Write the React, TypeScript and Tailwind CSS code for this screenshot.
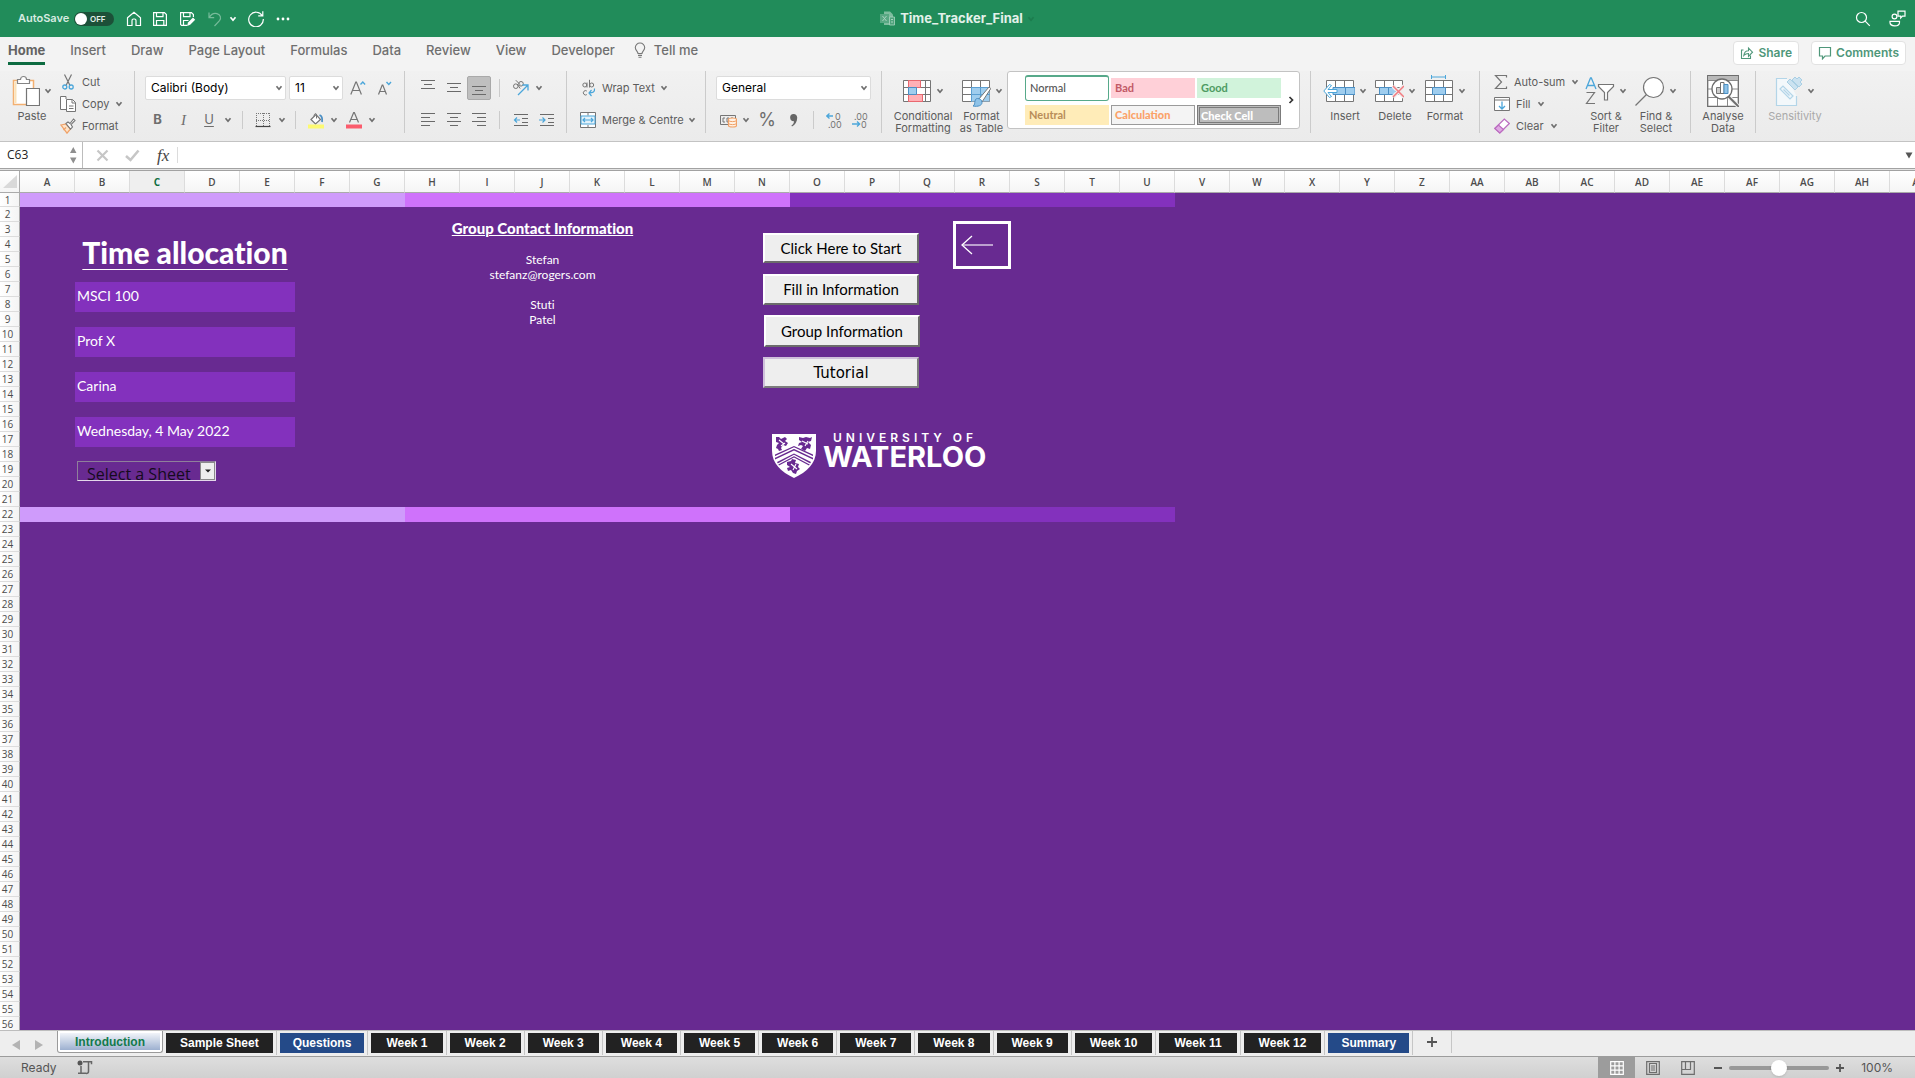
import React from 'react';

type Kids = { children?: React.ReactNode };

/* ---------- shared bits ---------- */

function Svg({ w, h, children, className = '' }: Kids & { w: number; h: number; className?: string }) {
  return (
    <svg width={w} height={h} viewBox={`0 0 ${w} ${h}`} fill="none" aria-hidden="true" className={`shrink-0 ${className}`}>
      {children}
    </svg>
  );
}

function Chevron({ className = 'text-[#6e6e6e]' }: { className?: string }) {
  return (
    <Svg w={8} h={6} className={className}>
      <path d="M1.5 1.3 4 4.2l2.5-2.9" stroke="currentColor" strokeWidth="1.7" />
    </Svg>
  );
}

function IconButton({ label, children, className = '' }: Kids & { label: string; className?: string }) {
  return (
    <button type="button" aria-label={label} className={`flex shrink-0 items-center justify-center ${className}`}>
      {children}
    </button>
  );
}

function Divider() {
  return <span className="h-[62px] w-px shrink-0 bg-[#cbcbcb]" />;
}

function ShortDivider() {
  return <span className="h-[18px] w-px shrink-0 bg-[#cbcbcb]" />;
}

/* ---------- title bar ---------- */

function TitleBar() {
  return (
    <header className="grid h-[37px] shrink-0 grid-cols-[1fr_auto_1fr] items-center bg-[#218c5a] text-white">
      <div className="flex items-center pl-[18px]">
        <label htmlFor="autosave" className="w-[56px] text-[11px] font-semibold text-[#d8ebe1]">
          AutoSave
        </label>
        <span className="relative flex h-[14px] w-10 items-center rounded-full bg-[#1c5038]">
          <input
            id="autosave"
            type="checkbox"
            className="ml-px h-3 w-3 appearance-none rounded-full bg-white"
          />
          <span className="ml-[3px] text-[8px] font-semibold text-[#e3efe9]">OFF</span>
        </span>
        <div className="ml-3 flex items-center gap-[10px]">
          <IconButton label="Home">
            <Svg w={16} h={16}>
              <path d="M1.5 6.8 8 1.2l6.5 5.6v7.7H10V9.5a1.5 1.5 0 0 0-1.5-1.5h-1A1.5 1.5 0 0 0 6 9.5v5H1.5z" stroke="#fff" strokeWidth="1.2" />
            </Svg>
          </IconButton>
          <IconButton label="Save">
            <Svg w={16} h={16}>
              <path d="M1.6 1.6h10.8l2 2v10.8H1.6zM4.5 1.6v4h6.5v-4M4.5 14.4V9.5h7.3v4.9" stroke="#fff" strokeWidth="1.2" />
            </Svg>
          </IconButton>
          <IconButton label="Save as" className="ml-px">
            <Svg w={18} h={16}>
              <path d="M8 14.4H2.6l-1-1V1.6h10.8l2 2V6M4.5 1.6v4h6.5v-4M4.5 14V9.5h5" stroke="#fff" strokeWidth="1.2" />
              <path d="m8 15 1-3.5 5-5 2.2 2.3-5 5z" fill="#fff" />
            </Svg>
          </IconButton>
          <IconButton label="Undo">
            <Svg w={16} h={16}>
              <path d="M2 1.5v5.2h5.2M2.2 6.5C4 3.4 7 1.800 10 2.600c3.500.9 4.500 4.400 2.500 7L7.500 15" stroke="#76bb9a" strokeWidth="1.2" />
            </Svg>
          </IconButton>
          <span className="-ml-1">
            <Chevron className="text-white" />
          </span>
          <IconButton label="Redo">
            <Svg w={18} h={17}>
              <path d="M15.300 5.800A7.300 7.300 0 1 0 16.300 9M15.800 1.200v4.600h-4.600" stroke="#fff" strokeWidth="1.2" />
            </Svg>
          </IconButton>
          <IconButton label="More commands">
            <Svg w={16} h={4}>
              <circle cx="3" cy="2" r="1.4" fill="#fff" />
              <circle cx="8" cy="2" r="1.4" fill="#fff" />
              <circle cx="13" cy="2" r="1.4" fill="#fff" />
            </Svg>
          </IconButton>
        </div>
      </div>
      <h1 className="flex items-center gap-1 text-[13px] font-bold text-[#e3f1ea]">
        <Svg w={16} h={15}>
          <path d="M4 .5h6l3 3V14H4z" fill="#7fbd9f" />
          <path d="M0 3h9v9H0z" fill="#58a883" />
          <path d="m2.500 5 4 5m0-5-4 5" stroke="#a9d3bf" />
          <path d="M9.500 6h5v8h-5z" fill="#4fa37c" stroke="#a9d3bf" strokeWidth=".8" />
          <path d="M11 8.500h2M11 11h2" stroke="#a9d3bf" />
        </Svg>
        Time_Tracker_Final
        <Chevron className="text-[#1c7c4e]" />
      </h1>
      <div className="flex items-center justify-end gap-[18px] pr-[9px]">
        <IconButton label="Search">
          <Svg w={16} h={16}>
            <circle cx="6.500" cy="6.500" r="5" stroke="#fff" strokeWidth="1.2" />
            <path d="m10.200 10.200 4.600 4.600" stroke="#fff" strokeWidth="1.2" />
          </Svg>
        </IconButton>
        <IconButton label="Collaboration">
          <Svg w={17} h={17}>
            <circle cx="5.500" cy="6.500" r="2.400" stroke="#fff" strokeWidth="1.2" />
            <path d="M1 11.400h9.500v1c0 2-2 3.400-4.700 3.400S1 14.400 1 12.400zM9 1.200h7v5h-2.500l-1.800 1.900V6.200H9z" stroke="#fff" strokeWidth="1.2" />
          </Svg>
        </IconButton>
      </div>
    </header>
  );
}

/* ---------- ribbon tabs ---------- */

const ribbonTabs = ['Insert', 'Draw', 'Page Layout', 'Formulas', 'Data', 'Review', 'View', 'Developer'];

function RibbonTabs() {
  return (
    <nav className="flex h-[34px] shrink-0 items-start justify-between bg-[#f3f3f3] text-[13px] font-medium text-[#6f6f6f]">
      <div className="flex gap-[25px] pt-1 pl-2">
        <button type="button" className="h-[24px] border-b-[3px] border-[#0d6b41] pb-[3px] leading-[18px] font-bold text-[#636363]">
          Home
        </button>
        {ribbonTabs.map((t) => (
          <button key={t} type="button" className="h-[21px] pb-[3px] leading-[18px]">
            {t}
          </button>
        ))}
        <button type="button" className="-ml-[6px] flex h-[21px] items-center gap-2 pb-[3px] leading-[18px]">
          <Svg w={12} h={16}>
            <path d="M4 11.500C4 9.500 1.300 8.600 1.300 5.500A4.600 4.600 0 0 1 6 1a4.600 4.600 0 0 1 4.700 4.500C10.700 8.600 8 9.500 8 11.500zM4 13.400h4M4.500 15.200h3" stroke="#777" strokeWidth="1.1" />
          </Svg>
          Tell me
        </button>
      </div>
      <div className="flex gap-3 pt-1 pr-[9px] text-[12px] font-semibold text-[#4f977a]">
        <button type="button" className="flex h-6 items-center gap-1 rounded-sm border border-[#e2e2e2] bg-white px-[6px]">
          <Svg w={14} h={14}>
            <path d="M3.500 4H1.500v8.500h9V9.500" stroke="currentColor" strokeWidth="1.100" />
            <path d="M3.800 9.500c.4-3 2-4.800 4.700-4.800V2l4 4.200-4 4.100V7.500c-2 0-3.500.7-4.700 2z" stroke="currentColor" strokeWidth="1.100" />
          </Svg>
          Share
        </button>
        <button type="button" className="flex h-6 items-center gap-1 rounded-sm border border-[#e2e2e2] bg-white px-[6px]">
          <Svg w={14} h={14}>
            <path d="M1.500 1.500h11v8.500H7L4.500 12.800V10h-3z" stroke="currentColor" strokeWidth="1.200" />
          </Svg>
          Comments
        </button>
      </div>
    </nav>
  );
}

/* ---------- ribbon ---------- */

function BigButton({ lines, icon, chevron = true, className }: { lines: string[]; icon: React.ReactNode; chevron?: boolean; className: string }) {
  return (
    <button type="button" className={`flex h-[63px] shrink-0 flex-col items-center ${className}`}>
      <span className="flex h-[39px] items-center gap-1">
        {icon}
        {chevron && <Chevron />}
      </span>
      {lines.map((l) => (
        <span key={l} className="leading-3 whitespace-nowrap">
          {l}
        </span>
      ))}
    </button>
  );
}

function SmallButton({ label, icon, chevron = false }: { label: string; icon: React.ReactNode; chevron?: boolean }) {
  return (
    <button type="button" className="flex h-[22px] items-center whitespace-nowrap">
      <span className="mr-[6px] flex w-4 justify-center">{icon}</span>
      {label}
      {chevron && (
        <span className="ml-[6px]">
          <Chevron />
        </span>
      )}
    </button>
  );
}

function Combo({ label, value, className }: { label: string; value: string; className: string }) {
  return (
    <span className={`relative flex h-6 items-center ${className}`}>
      <select
        aria-label={label}
        defaultValue={value}
        className="h-6 w-full appearance-none rounded-[2px] border border-[#dcdcdc] bg-white pl-[5px] text-[12px] text-black"
      >
        <option>{value}</option>
      </select>
      <span className="pointer-events-none absolute right-[3px] flex">
        <Chevron />
      </span>
    </span>
  );
}

function Lines({ widths, align }: { widths: number[]; align: 'start' | 'center' | 'end' }) {
  const h = widths.length * 4;
  return (
    <Svg w={14} h={h}>
      {widths.map((w, i) => {
        const x = align === 'start' ? 0 : align === 'end' ? 14 - w : (14 - w) / 2;
        return <path key={i} d={`M${x} ${i * 4 + 1.5}h${w}`} stroke="#6a6a6a" />;
      })}
    </Svg>
  );
}

function GridIcon({ children }: Kids) {
  return (
    <Svg w={30} h={32}>
      <path d="M1.500 5.500h27v21h-27z" fill="#fff" stroke="#757575" />
      <path d="M1 12.500h28M1 19.500h28M10.500 5v22M19.500 5v22" stroke="#757575" />
      {children}
    </Svg>
  );
}

function Clipboard() {
  return (
    <>
      <BigButton
        className="ml-[11px] w-[42px]"
        lines={['Paste']}
        icon={
          <Svg w={28} h={32}>
            <path d="M1.500 5.500h20v24h-20z" fill="#fff" stroke="#f3b071" strokeWidth="1.500" />
            <path d="M3.500 7v21" stroke="#fbe2b8" strokeWidth="2" />
            <path d="M5.500 8.500v-4h3a3 3 0 0 1 6 0h3v4z" fill="#fff" stroke="#848484" strokeWidth="1.200" />
            <path d="M14.500 13.500h13v17h-13z" fill="#fff" stroke="#757575" strokeWidth="1.200" />
          </Svg>
        }
      />
      <div className="ml-[7px] flex w-[74px] shrink-0 flex-col">
        <SmallButton
          label="Cut"
          icon={
            <Svg w={12} h={16}>
              <path d="m2.500.5 5.500 11M9.500.5 4 11.500" stroke="#757575" strokeWidth="1.200" />
              <circle cx="2.800" cy="13" r="2" stroke="#4ba6da" strokeWidth="1.300" />
              <circle cx="9.200" cy="13" r="2" stroke="#4ba6da" strokeWidth="1.300" />
            </Svg>
          }
        />
        <SmallButton
          label="Copy"
          chevron
          icon={
            <Svg w={16} h={16}>
              <path d="M6 13.500H.500v-13H6v2.500" fill="#fff" stroke="#757575" />
              <path d="M6.500 3.500h6l3 3v9h-9z" fill="#fff" stroke="#757575" />
              <path d="M12 3.500v3.500h3.500M9 10h4.500M9 12.500h4.500" stroke="#757575" />
            </Svg>
          }
        />
        <SmallButton
          label="Format"
          icon={
            <Svg w={16} h={16}>
              <path d="m1 7 5-1 4.500 5L7 15.200z" fill="#fde3c8" stroke="#f0a167" strokeWidth="1.200" />
              <path d="m3.500 12 2.500-2.500" stroke="#f0a167" strokeWidth="1.200" />
              <path d="M6 5.500 8 4l2 1.500L13.500 1 15 2.500 11 6.500 12.500 9l-2 2.200z" fill="#fff" stroke="#757575" strokeWidth="1.100" />
            </Svg>
          }
        />
      </div>
    </>
  );
}

function FontGroup() {
  return (
    <div className="flex w-[269px] shrink-0 flex-col gap-2 pl-[10px]">
      <div className="flex items-center">
        <Combo label="Font" value="Calibri (Body)" className="w-[141px]" />
        <Combo label="Font size" value="11" className="ml-[3px] w-[54px]" />
        <IconButton label="Increase font size" className="ml-[7px]">
          <Svg w={17} h={16}>
            <path d="m.8 14.500 5-12.500h.6l5 12.500M2.500 10.500h7.200" stroke="#757575" strokeWidth="1.200" />
            <path d="m10.500 4.500 2.300-2.500 2.300 2.500" stroke="#4ba6da" strokeWidth="1.400" />
          </Svg>
        </IconButton>
        <IconButton label="Decrease font size" className="ml-[10px]">
          <Svg w={16} h={16}>
            <path d="m1.500 14.500 3.700-9.500h.6l3.700 9.500M2.800 11.500h5.600" stroke="#757575" strokeWidth="1.200" />
            <path d="m9.500 2 2.300 2.500L14 2" stroke="#4ba6da" strokeWidth="1.400" />
          </Svg>
        </IconButton>
      </div>
      <div className="flex h-6 items-center text-[13px] text-[#6e6e6e]">
        <IconButton label="Bold" className="w-[25px] font-bold">B</IconButton>
        <IconButton label="Italic" className="w-[27px] font-[Liberation_Serif] text-[15px] italic">I</IconButton>
        <IconButton label="Underline" className="w-[24px] underline underline-offset-2">U</IconButton>
        <span className="ml-[3px] w-[18px]"><Chevron /></span>
        <ShortDivider />
        <IconButton label="Borders" className="ml-3">
          <Svg w={16} h={16}>
            <path d="M1 1.500h14M1 8.500h14M1.500 1v13M8.500 1v13M14.500 1v13" stroke="#777" strokeDasharray="1 1" />
            <path d="M.500 14.500h15" stroke="#444" strokeWidth="1.200" />
          </Svg>
        </IconButton>
        <span className="ml-[7px] w-[17px]"><Chevron /></span>
        <ShortDivider />
        <IconButton label="Fill colour" className="ml-3">
          <Svg w={17} h={17}>
            <path d="m3 7.500 5-5 4.500 5-5 4.500z" fill="#fff" stroke="#757575" strokeWidth="1.200" />
            <path d="M6 4.500C6 1.500 8 .8 8.500 2.500v4" stroke="#757575" />
            <path d="M11.500 3c2.500 1 3 4 2.500 7" stroke="#4b8fc4" strokeWidth="1.800" />
            <path d="M0 12.500h16v4H0z" fill="#fdfa72" />
          </Svg>
        </IconButton>
        <span className="ml-[5px] w-[16px]"><Chevron /></span>
        <IconButton label="Font colour">
          <Svg w={16} h={17}>
            <path d="m3.500 10.500 4.200-10h.600l4.200 10M5 7.500h6" stroke="#757575" strokeWidth="1.200" />
            <path d="M0 12.500h16v4H0z" fill="#fb5c6d" />
          </Svg>
        </IconButton>
        <span className="ml-[6px]"><Chevron /></span>
      </div>
    </div>
  );
}

function AlignGroup() {
  return (
    <div className="flex w-[161px] shrink-0 flex-col gap-2 pl-[10px]">
      <div className="flex h-6 items-center">
        <IconButton label="Top align" className="h-6 w-[26px] pb-[6px]"><Lines widths={[14, 8, 14]} align="center" /></IconButton>
        <IconButton label="Middle align" className="h-6 w-[26px]"><Lines widths={[14, 8, 14]} align="center" /></IconButton>
        <IconButton label="Bottom align" className="h-6 w-[24px] rounded-[2px] border border-[#a9a9a9] bg-[#bfbfbf] pt-[6px]"><Lines widths={[14, 8, 14]} align="center" /></IconButton>
        <span className="ml-[8px] flex"><ShortDivider /></span>
        <IconButton label="Orientation" className="ml-3">
          <Svg w={18} h={18}>
            <circle cx="3.800" cy="7.200" r="2.300" stroke="#757575" />
            <path d="m5.200 5 3 4.500" stroke="#757575" />
            <circle cx="9" cy="4.800" r="2.300" stroke="#757575" />
            <path d="M3.800 1.200 8 5.500" stroke="#757575" />
            <path d="m6 16 9.500-9.500M10.500 6H16v5.500" stroke="#4ba6da" strokeWidth="1.300" />
          </Svg>
        </IconButton>
        <span className="ml-[5px]"><Chevron /></span>
      </div>
      <div className="flex h-6 items-center">
        <IconButton label="Align left" className="w-[26px]"><Lines widths={[14, 9, 14, 9]} align="start" /></IconButton>
        <IconButton label="Align centre" className="w-[26px]"><Lines widths={[14, 8, 14, 8]} align="center" /></IconButton>
        <IconButton label="Align right" className="w-[24px]"><Lines widths={[14, 9, 14, 9]} align="end" /></IconButton>
        <span className="ml-[8px] flex"><ShortDivider /></span>
        <IconButton label="Decrease indent" className="ml-[13px]">
          <Svg w={15} h={14}>
            <path d="M1 1.500h14M9 5.500h6M9 9.500h6M1 12.500h14" stroke="#6a6a6a" />
            <path d="M7 7H1.500M4 4.500 1.500 7 4 9.500" stroke="#4ba6da" strokeWidth="1.200" />
          </Svg>
        </IconButton>
        <IconButton label="Increase indent" className="ml-[11px]">
          <Svg w={15} h={14}>
            <path d="M1 1.500h14M9 5.500h6M9 9.500h6M1 12.500h14" stroke="#6a6a6a" />
            <path d="M0 7h5.500M3.500 4.500 6 7 3.500 9.500" stroke="#4ba6da" strokeWidth="1.200" />
          </Svg>
        </IconButton>
      </div>
    </div>
  );
}

function WrapGroup() {
  return (
    <div className="flex w-[138px] shrink-0 flex-col gap-2 pl-[13px]">
      <button type="button" className="flex h-6 items-center">
        <Svg w={16} h={18} className="mr-[6px]">
          <circle cx="4.800" cy="6" r="2" stroke="#757575" />
          <path d="M7 3.500v5M9.500.8v7.700" stroke="#757575" />
          <circle cx="11.700" cy="6" r="2" stroke="#757575" />
          <path d="M6.800 12a2.200 2.200 0 1 0 0 3.600" stroke="#757575" />
          <path d="M14.500 9.500c.500 3.500-1.500 4.500-5.500 4.500M11.500 11 9 14l2.500 3" stroke="#4ba6da" strokeWidth="1.200" />
        </Svg>
        Wrap Text
        <span className="ml-[5px]"><Chevron /></span>
      </button>
      <button type="button" className="flex h-6 items-center whitespace-nowrap">
        <Svg w={16} h={16} className="mr-[6px]">
          <path d="M.500.500h15v15H.500zM8 .500v3M8 13v2.500" fill="#fff" stroke="#757575" />
          <path d="M1 4h14v8H1z" fill="#e4f2fa" stroke="#4ba6da" />
          <path d="M3 8h10M5 6 3 8l2 2M11 6l2 2-2 2" stroke="#4ba6da" strokeWidth="1.200" />
        </Svg>
        Merge &amp; Centre
        <span className="ml-1"><Chevron /></span>
      </button>
    </div>
  );
}

function NumberGroup() {
  return (
    <div className="flex w-[175px] shrink-0 flex-col gap-2 pl-[10px]">
      <Combo label="Number format" value="General" className="w-[155px]" />
      <div className="flex h-6 items-center">
        <IconButton label="Accounting format" className="ml-[3px]">
          <Svg w={18} h={16}>
            <path d="M1.500 3.500h15v9h-15z" stroke="#757575" />
            <path d="M6 6H4v4h2M8 6h2v4H8zM12 6h2" stroke="#757575" />
            <path d="M9.500 7.500c0-2 8-2 8 0v6c0 2-8 2-8 0z" fill="#fff1e4" stroke="#f0a167" strokeWidth="1.200" />
            <path d="M9.500 8.500c1 1.500 7 1.500 8 0M9.500 11.500c1 1.500 7 1.500 8 0" stroke="#f0a167" />
          </Svg>
        </IconButton>
        <span className="ml-[5px]"><Chevron /></span>
        <IconButton label="Percent style" className="ml-2 w-[18px] text-[18px] leading-none text-[#6e6e6e]">%</IconButton>
        <IconButton label="Comma style" className="ml-[13px]">
          <Svg w={9} h={13}>
            <path d="M4.500 0a3.600 3.600 0 0 1 3.700 3.800c0 4-2 7.200-5.200 8.700l-.6-.9C4 10.500 5 9 5 7.200A3.500 3.500 0 1 1 4.500 0z" fill="#666" />
          </Svg>
        </IconButton>
        <span className="mr-3 ml-[15px] flex"><ShortDivider /></span>
        <IconButton label="Increase decimal">
          <Svg w={16} h={17}>
            <text x="9" y="8" fontSize="9" fill="#757575">0</text>
            <text x="2" y="16" fontSize="9" fill="#757575">.00</text>
            <path d="M7 4H.500M3.500 1.500.800 4l2.700 2.500" stroke="#4ba6da" strokeWidth="1.300" />
          </Svg>
        </IconButton>
        <IconButton label="Decrease decimal" className="ml-[10px]">
          <Svg w={16} h={17}>
            <text x="2" y="8" fontSize="9" fill="#757575">.00</text>
            <text x="9" y="16" fontSize="9" fill="#757575">0</text>
            <path d="M0 12h7.500M5 9.500 7.700 12 5 14.500" stroke="#4ba6da" strokeWidth="1.300" />
          </Svg>
        </IconButton>
      </div>
    </div>
  );
}

function StylesGroup() {
  return (
    <>
      <BigButton
        className="ml-[6px] w-[70px]"
        lines={['Conditional', 'Formatting']}
        icon={
          <Svg w={30} h={32}>
            <path d="M1.500 5.500h27v21h-27z" fill="#fff" stroke="#757575" />
            <path d="M1 12.500h28M1 19.500h28M6.500 5v22M23.500 5v22" stroke="#757575" />
            <path d="M6.500 5.500h12v7h-12zM6.500 19.500h14v7h-14z" fill="#ffb0b6" stroke="#e9686f" />
            <path d="M6.500 12.500h8v7h-8z" fill="#9fcdee" stroke="#4b8fc4" />
          </Svg>
        }
      />
      <BigButton
        className="w-[47px]"
        lines={['Format', 'as Table']}
        icon={
          <GridIcon>
            <path d="M10.500 12.500h18v14h-18z" fill="#9fcdee" />
            <path d="M10 12.500h19M10 19.500h19M10.500 12v15M19.500 12v15" stroke="#5b9fd2" />
            <path d="m28 12 1.800 1.500L21 27l-3.500-2.500z" fill="#fff" stroke="#757575" />
            <path d="M16.500 23.500c2.500 0 4.500 1.500 4.500 4 0 3-4 4.500-9 3.500 2-1 1.500-3 2-5 .300-1.500 1-2.500 2.500-2.500z" fill="#8fc3e8" stroke="#4b8fc4" />
          </GridIcon>
        }
      />
      <div className="ml-[2px] flex h-[58px] shrink-0 items-center rounded-[3px] border border-[#c3c3c3] bg-white pr-1 pl-[17px] font-[Lato] text-[11px]">
        <div className="grid grid-cols-[84px_84px_84px] items-center gap-x-0.5 gap-y-1">
          <button type="button" className="h-[26px] rounded-[3px] border border-t-2 border-[#57a98a] bg-white px-1 text-left font-medium text-[#555]">Normal</button>
          <button type="button" className="h-5 bg-[#ffd0d8] px-1 text-left font-bold text-[#c25a66]">Bad</button>
          <button type="button" className="h-5 bg-[#d1f3db] px-1 text-left font-bold text-[#4e9b62]">Good</button>
          <button type="button" className="h-5 bg-[#ffecb8] px-1 text-left font-bold text-[#b98d59]">Neutral</button>
          <button type="button" className="h-5 border border-[#9b9b9b] bg-[#f4f4f4] px-[3px] text-left font-black text-[#fba269]">Calculation</button>
          <button type="button" className="h-5 border-[3px] border-double border-[#7b7b7b] bg-[#bdbdbd] px-px text-left leading-none font-black text-white">Check Cell</button>
        </div>
        <IconButton label="More styles" className="ml-[7px]">
          <Svg w={7} h={8}>
            <path d="m1.500 1 3 3-3 3" stroke="#333" strokeWidth="1.700" />
          </Svg>
        </IconButton>
      </div>
    </>
  );
}

function CellsGroup() {
  return (
    <div className="flex w-[168px] shrink-0 pl-[9px]">
      <BigButton
        className="w-[50px]"
        lines={['Insert']}
        icon={
          <Svg w={32} h={32}>
            <path d="M3.500 5.500h27v21h-27z" fill="#fff" stroke="#757575" />
            <path d="M12.500 5v22M21.500 5v22" stroke="#757575" />
            <path d="M10 12.500h22v7H10z" fill="#9fcdee" stroke="#4b8fc4" />
            <path d="M22.500 12v8" stroke="#4b8fc4" />
            <path d="M14 14.500v3H5l3.500 4-2 1L.800 16 6.500 9.500l2 1L5 14.500z" fill="#fff" stroke="#4ba6da" />
          </Svg>
        }
      />
      <BigButton
        className="w-[50px]"
        lines={['Delete']}
        icon={
          <Svg w={30} h={32}>
            <path d="M1.500 5.500h27v7h-27zM1.500 19.500h27v7h-27z" fill="#fff" stroke="#757575" />
            <path d="M10.500 5v7.500M19.500 5v7.500M10.500 19.500V27M19.500 19.500V27" stroke="#757575" />
            <path d="M5.500 12.500h16v7h-16zM14.500 12.500v7" fill="#9fcdee" stroke="#4b8fc4" />
            <path d="m19 11 11 11M30 11 19 22" stroke="#ededed" strokeWidth="4" />
            <path d="m19 11 11 11M30 11 19 22" stroke="#f37b80" strokeWidth="1.500" />
          </Svg>
        }
      />
      <BigButton
        className="w-[50px]"
        lines={['Format']}
        icon={
          <GridIcon>
            <path d="M8.500 12.500h13v7h-13z" fill="#9fcdee" stroke="#4b8fc4" />
            <path d="M7.500 2h14M7.500 0v4M21.500 0v4" stroke="#4ba6da" />
          </GridIcon>
        }
      />
    </div>
  );
}

function EditingGroup() {
  return (
    <>
      <div className="flex w-[91px] shrink-0 flex-col pl-[14px]">
        <SmallButton
          label="Auto-sum"
          chevron
          icon={
            <Svg w={14} h={16}>
              <path d="M12.500 3.500v-2H1.500L7.500 8l-6 6.500h11v-2" stroke="#757575" strokeWidth="1.200" />
            </Svg>
          }
        />
        <SmallButton
          label="Fill"
          chevron
          icon={
            <Svg w={16} h={15}>
              <path d="M.500.500h15v13H.500zM.500 3h15" fill="#fff" stroke="#757575" />
              <path d="M8 4.500v7M5 9l3 3 3-3" stroke="#4ba6da" strokeWidth="1.300" />
            </Svg>
          }
        />
        <SmallButton
          label="Clear"
          chevron
          icon={
            <Svg w={16} h={16}>
              <path d="m.800 10.500 9.500-9.500 5 4.500-9.500 9.500z" fill="#fff" stroke="#bb6cc0" strokeWidth="1.200" />
              <path d="M.800 10.500 4.500 7l5 4.500L5.800 15z" fill="#dfa9e2" stroke="#bb6cc0" strokeWidth="1.200" />
            </Svg>
          }
        />
      </div>
      <BigButton
        className="ml-[10px] w-[50px]"
        lines={['Sort &', 'Filter']}
        icon={
          <Svg w={30} h={32}>
            <path d="m1 14 4.500-11h.800L11 14M2.500 10.500h7" stroke="#4ba6da" strokeWidth="1.300" />
            <path d="M1.500 17.500h8l-8 11h8.500" stroke="#757575" strokeWidth="1.200" />
            <path d="M13.500 9.500h15v2l-6 6V25h-3v-7.500l-6-6z" fill="#fff" stroke="#757575" strokeWidth="1.200" />
          </Svg>
        }
      />
      <BigButton
        className="w-[50px]"
        lines={['Find &', 'Select']}
        icon={
          <Svg w={30} h={32}>
            <circle cx="18.500" cy="12.500" r="10" fill="#fff" stroke="#757575" strokeWidth="1.200" />
            <path d="m11.500 19.500-11 11" stroke="#757575" strokeWidth="1.200" />
          </Svg>
        }
      />
    </>
  );
}

function Ribbon() {
  return (
    <section className="flex h-[71px] shrink-0 items-start overflow-hidden border-b border-[#c3c3c3] bg-[linear-gradient(#f1f1f1,#ebebeb)] text-[11px] text-[#5c5c5c]">
      <Clipboard />
      <Divider />
      <div className="flex pt-[5px]"><FontGroup /></div>
      <Divider />
      <div className="flex pt-[5px]"><AlignGroup /></div>
      <Divider />
      <div className="flex pt-[5px]"><WrapGroup /></div>
      <Divider />
      <div className="flex pt-[5px]"><NumberGroup /></div>
      <Divider />
      <StylesGroup />
      <span className="w-[10px] shrink-0" />
      <Divider />
      <CellsGroup />
      <Divider />
      <EditingGroup />
      <span className="w-[9px] shrink-0" />
      <Divider />
      <BigButton
        className="w-16"
        chevron={false}
        lines={['Analyse', 'Data']}
        icon={
          <Svg w={32} h={32}>
            <path d="M.700.700h30.600v30.600H.700z" fill="#fff" stroke="#6d6d6d" strokeWidth="1.300" />
            <path d="M1 1h30v4H1z" fill="#b9b9b9" />
            <path d="M1 5.500h30M1 14h30M1 22.500h30M10.500 5v26M20.500 22v9" stroke="#8a8a8a" />
            <path d="m22 22 9 9" stroke="#ededed" strokeWidth="4" />
            <path d="m21.500 21.500 9.500 9.500" stroke="#6d6d6d" strokeWidth="1.800" />
            <circle cx="15" cy="14" r="10" fill="#fff" stroke="#6d6d6d" strokeWidth="1.300" />
            <path d="M9.500 12.500h4v6h-4z" fill="#ccc" stroke="#757575" />
            <path d="M13.500 7.500h3.500v11h-3.500z" fill="#fff" stroke="#6d6d6d" />
            <path d="M17 9.500h4v9h-4z" fill="#8fc3e8" stroke="#4b8fc4" />
          </Svg>
        }
      />
      <Divider />
      <BigButton
        className="ml-[10px] w-[58px] text-[#a9a9a9]"
        lines={['Sensitivity']}
        icon={
          <Svg w={28} h={32}>
            <path d="M12 3.500H1.500v27h20V21" fill="#f3f8fb" stroke="#b3d5e8" strokeWidth="1.200" />
            <path d="m5 14 3-3 10 10-3 3zM8.500 14.500l6 6" fill="#edf5fa" stroke="#b3d5e8" strokeWidth="1.200" />
            <path d="m12 7 3-3 8 8-3 3zM17 5l3-3 2 2 2-2 3 3-2 2 2 2-3 3z" fill="#cbe2f0" stroke="#a9cfe4" />
          </Svg>
        }
      />
    </section>
  );
}

/* ---------- formula bar ---------- */

function FormulaBar() {
  return (
    <div className="flex h-[29px] shrink-0 items-stretch border-b border-[#a2a2a2] bg-[#e4e4e4] pb-px">
      <div className="flex w-full items-center border-b border-[#a2a2a2] bg-white">
        <input aria-label="Name box" defaultValue="C63" className="w-[66px] pl-[7px] font-[Open_Sans] text-[12px] text-[#222]" />
        <Svg w={16} h={22}>
          <path d="M4 9h6.500L7.300 3zM4 13.500h6.500L7.300 19.500z" fill="#8f8f8f" />
        </Svg>
        <span className="h-[26px] w-px bg-[#bcbcbc]" />
        <IconButton label="Cancel" className="ml-[13px]">
          <Svg w={13} h={13}>
            <path d="m1.500 1.500 10 10M11.500 1.500l-10 10" stroke="#c6c6c6" strokeWidth="2.200" />
          </Svg>
        </IconButton>
        <IconButton label="Enter" className="ml-4">
          <Svg w={15} h={13}>
            <path d="m1 7 4.500 4L13.500 1.500" stroke="#c6c6c6" strokeWidth="2.600" />
          </Svg>
        </IconButton>
        <IconButton label="Insert function" className="ml-[17px] font-[Liberation_Serif] text-[17px] leading-none text-[#444] italic">fx</IconButton>
        <span className="ml-2 h-4 w-px bg-[#dcdcdc]" />
        <input aria-label="Formula" className="min-w-0 flex-1 px-2 text-[12px]" />
        <IconButton label="Expand formula bar" className="pr-[2px]">
          <Svg w={8} h={7}>
            <path d="M.500.500h7l-3.500 6z" fill="#555" />
          </Svg>
        </IconButton>
      </div>
    </div>
  );
}

/* ---------- sheet ---------- */

const columns = [
  ...'ABCDEFGHIJKLMNOPQRSTUVWXYZ'.split(''),
  'AA', 'AB', 'AC', 'AD', 'AE', 'AF', 'AG', 'AH', 'AI',
];
const rowCount = 56;

type Cell = { row: number; col: number; rows: number; cols: number; text?: string; className: string };

const fieldStyle = 'bg-[#8331bd] pl-0.5 pb-0.5 text-left text-[14px] leading-[18px]';
const contactStyle = 'text-center text-[12px] leading-[14px]';

const cells: Cell[] = [
  ...[1, 22].flatMap((row) => [
    { row, col: 1, rows: 1, cols: 7, className: 'bg-[#cf9bfb]' },
    { row, col: 8, rows: 1, cols: 7, className: 'bg-[#cf72fb]' },
    { row, col: 15, rows: 1, cols: 7, className: 'bg-[#8331bd]' },
  ]),
  { row: 3, col: 8, rows: 1, cols: 5, text: 'Group Contact Information', className: 'pb-0.5 text-center text-[15px] leading-[13px] font-black underline decoration-1' },
  { row: 4, col: 2, rows: 2, cols: 4, text: 'Time allocation', className: 'text-center text-[30px] leading-[28px] font-black underline decoration-1 underline-offset-[5px]' },
  { row: 5, col: 8, rows: 1, cols: 5, text: 'Stefan', className: contactStyle },
  { row: 6, col: 8, rows: 1, cols: 5, text: 'stefanz@rogers.com', className: contactStyle },
  { row: 8, col: 8, rows: 1, cols: 5, text: 'Stuti', className: contactStyle },
  { row: 9, col: 8, rows: 1, cols: 5, text: 'Patel', className: contactStyle },
  { row: 7, col: 2, rows: 2, cols: 4, text: 'MSCI 100', className: fieldStyle },
  { row: 10, col: 2, rows: 2, cols: 4, text: 'Prof X', className: fieldStyle },
  { row: 13, col: 2, rows: 2, cols: 4, text: 'Carina', className: fieldStyle },
  { row: 16, col: 2, rows: 2, cols: 4, text: 'Wednesday, 4 May 2022', className: fieldStyle },
];

function rowCells(row: number) {
  const out: React.ReactNode[] = [];
  let col = 1;
  while (col <= columns.length) {
    const hit = cells.find((c) => row >= c.row && row < c.row + c.rows && col >= c.col && col < c.col + c.cols);
    if (hit) {
      if (hit.row === row) {
        out.push(
          <td key={col} colSpan={hit.cols} rowSpan={hit.rows} className={`overflow-visible whitespace-nowrap p-0 align-middle ${hit.className}`}>
            {hit.text}
          </td>,
        );
      }
      col = hit.col + hit.cols;
    } else {
      out.push(<td key={col} className="p-0" />);
      col += 1;
    }
  }
  return out;
}

function SheetTable() {
  return (
    <table className="w-[1945px] table-fixed border-separate border-spacing-0 font-[Lato] text-white [font-variant-ligatures:none]">
      <colgroup>
        <col className="w-5" />
        {columns.map((c) => (
          <col key={c} className="w-[55px]" />
        ))}
      </colgroup>
      <thead>
        <tr className="h-[22px] bg-[linear-gradient(#ffffff,#f4f4f4)] font-[Open_Sans] text-[10px] leading-3 text-[#4c4c4c]">
          <th className="border-r border-b border-[#aaa] p-0" aria-label="Select all">
            <Svg w={17} h={17} className="ml-0.5">
              <path d="M15 2v13H1z" fill="#d9d9d9" />
            </Svg>
          </th>
          {columns.map((c) => (
            <th
              key={c}
              scope="col"
              className={`border-r border-b border-r-[#dcdcdc] border-b-[#aaa] p-0 ${c === 'C' ? 'bg-[#efefef] font-bold text-[#0e6e40]' : 'font-semibold'}`}
            >
              {c}
            </th>
          ))}
        </tr>
      </thead>
      <tbody>
        {Array.from({ length: rowCount }, (_, i) => i + 1).map((row) => (
          <tr key={row} className={row === 1 ? 'h-[14px]' : 'h-[15px]'}>
            <th
              scope="row"
              className="border-r border-b border-r-[#aaa] border-b-[#dcdcdc] bg-[linear-gradient(90deg,#ffffff,#f4f4f4)] p-0 pr-1 text-center font-[Open_Sans] text-[10px] leading-3 font-medium text-[#4c4c4c]"
            >
              {row}
            </th>
            {rowCells(row)}
          </tr>
        ))}
      </tbody>
    </table>
  );
}

function WaterlooLogo() {
  return (
    <div className="absolute top-[262px] left-[771px] flex items-start gap-[6px] text-white">
      <Svg w={46} h={46}>
        <path d="M1 1h44v17c0 12-9 21-22 27C10 39 1 30 1 18z" fill="#fff" />
        <path d="M4 21.500 23 13l19 8.500v5L23 17.500 4 26.500zM6 29l17-8.500L40 29l-2 3.500-15-8-15 8z" fill="#682a91" />
        <path d="m4 24 19-9 19 9M7 31l16-8.500L39 31" stroke="#fff" strokeWidth="1.400" />
        <path d="M5 4h3l2 2 4-2 2 2-2 2 3 2-2 3-3-1-2 3 1 2-3 1-1-2-2-1 1-3 2-2-3-1zM28 4l4 1 3-1 4 1 2-1-1 4-3 1 3 3-1 4-3-1-2 3-4-2 2-3-2-1-3 1 1-3 3-1-3-2zM16 29l4-1 1-2 4 1-1 3 4 1-1 3 2 2-3 2-1 3-3-1-2-3-3 1-1-3 3-1-3-2z" fill="#682a91" />
        <path d="m8 7 5 4M10 13l4-3M31 8l6 3M34 13l3-5M20 31l6 5M22 37l3-6" stroke="#fff" strokeWidth="1.100" />
      </Svg>
      <p className="flex flex-col font-[Inter]">
        <span className="pl-[10px] text-[12px] leading-[10px] font-semibold tracking-[4px]">UNIVERSITY OF</span>
        <span className="text-[29px] leading-[27px] font-bold">WATERLOO</span>
      </p>
    </div>
  );
}

const raised = 'absolute border-2 border-t-white border-l-white border-r-[#6c6c6c] border-b-[#6c6c6c] bg-[#eeeeee] pb-px font-[Lato] text-[15px] leading-5 text-black whitespace-nowrap [font-variant-ligatures:none]';

/* Form controls float freely above the cells, as placed objects on the sheet. */
function SheetObjects() {
  return (
    <>
      <button type="button" className={`${raised} top-[62px] left-[763px] h-[30px] w-[156px]`}>Click Here to Start</button>
      <button type="button" className={`${raised} top-[103px] left-[763px] h-[31px] w-[156px]`}>Fill in Information</button>
      <button type="button" className={`${raised} top-[144px] left-[764px] h-[32px] w-[156px]`}>Group Information</button>
      <button
        type="button"
        className="absolute top-[186px] left-[763px] h-[31px] w-[156px] border-2 border-t-[#cfc0da] border-r-[#7c7c7c] border-b-[#7c7c7c] border-l-[#cfc0da] bg-[#eeeeee] pt-px font-[DejaVu_Sans] text-[15px] leading-5 text-black"
      >
        Tutorial
      </button>
      <button type="button" aria-label="Back" className="absolute top-[50px] left-[953px] h-12 w-[58px] border-[3px] border-white pl-1">
        <Svg w={34} h={20}>
          <path d="M33 10H2" stroke="#d9c9e4" strokeWidth="1.500" />
          <path d="M12 1 2 10l10 9" stroke="#fff" strokeWidth="1.300" />
        </Svg>
      </button>
      <div className="absolute top-[290px] left-[77px] flex h-5 w-[139px] items-stretch overflow-hidden border border-t-[#8f7f9b] border-r-[#e3d8ea] border-b-[#e3d8ea] border-l-[#8f7f9b]">
        <select
          aria-label="Select a Sheet"
          className="h-6 min-w-0 flex-1 appearance-none pl-[9px] font-[Open_Sans] text-[16px] leading-6 text-[#160a20]"
        >
          <option>Select a Sheet</option>
        </select>
        <span className="pointer-events-none flex w-[15px] items-center justify-center border border-[#8a8a8a] bg-[#eeeeee]">
          <Svg w={6} h={4}>
            <path d="M0 .500h6l-3 3z" fill="#222" />
          </Svg>
        </span>
      </div>
      <WaterlooLogo />
    </>
  );
}

/* ---------- sheet tabs and status bar ---------- */

const weekTabs = Array.from({ length: 12 }, (_, i) => `Week ${i + 1}`);

function SheetTab({ name, look }: { name: string; look: string }) {
  return (
    <span className="flex h-6 shrink-0 items-center border-r border-[#c6c6c6] px-[3px]">
      <button type="button" className={`h-5 whitespace-nowrap text-white ${look}`}>
        {name}
      </button>
    </span>
  );
}

function SheetTabs() {
  return (
    <nav className="flex h-[26px] shrink-0 items-start overflow-hidden border-t border-[#bdbdbd] bg-[#eeeeee] font-[Liberation_Sans] text-[12px] font-bold">
      <IconButton label="Previous sheet" className="ml-3 h-6 pt-1">
        <Svg w={9} h={10}><path d="M8 0v10L0 5z" fill="#b3b3b3" /></Svg>
      </IconButton>
      <IconButton label="Next sheet" className="ml-[13px] h-6 pt-1">
        <Svg w={9} h={10}><path d="M1 0v10l8-5z" fill="#b3b3b3" /></Svg>
      </IconButton>
      <span className="ml-[14px] flex h-[22px] shrink-0 rounded-b-[3px] border-x border-b border-[#9a9a9a] bg-white px-0.5 pt-0.5">
        <button type="button" className="h-[17px] bg-[linear-gradient(#f1f4f9,#9db0d0)] px-[15px] pt-0.5 leading-[15px] text-[#127a4c]">
          Introduction
        </button>
      </span>
      <SheetTab name="Sample Sheet" look="px-[14px] bg-[#222222]" />
      <SheetTab name="Questions" look="px-[13px] bg-[#244a88]" />
      {weekTabs.map((w) => (
        <SheetTab key={w} name={w} look="px-[15px] bg-[#222222]" />
      ))}
      <SheetTab name="Summary" look="px-[13px] bg-[#244a88]" />
      <button type="button" aria-label="Add sheet" className="flex h-[22px] w-[39px] shrink-0 items-center justify-center border-r border-[#c6c6c6]">
        <Svg w={10} h={10}><path d="M5 0v10M0 5h10" stroke="#555" strokeWidth="1.800" /></Svg>
      </button>
    </nav>
  );
}

function StatusBar() {
  return (
    <footer className="flex h-[22px] shrink-0 items-center justify-between border-t border-[#9c9c9c] bg-[linear-gradient(#dedede,#d0d0d0)] text-[12px] text-[#555]">
      <div className="flex items-center gap-5 pl-[21px]">
        Ready
        <IconButton label="Record macro">
          <Svg w={16} h={15}>
            <circle cx="3" cy="3" r="2.500" fill="#555" />
            <path d="M4 6v7M1 13.300h8M6 1.700h8.500v2.500M11.500 2v9.500c0 1.500-1 2-2.500 2" stroke="#666" strokeWidth="1.500" />
          </Svg>
        </IconButton>
      </div>
      <div className="flex h-full items-center pr-[22px]">
        <IconButton label="Normal view" className="h-full w-[37px] bg-[#9c9c9c]">
          <Svg w={14} h={14}>
            <path d="M.700.700h12.600v12.600H.700zM4.900 1v12M9.100 1v12M1 4.900h12M1 9.100h12" stroke="#fff" strokeWidth="1.200" />
          </Svg>
        </IconButton>
        <IconButton label="Page layout view" className="w-[35px]">
          <Svg w={14} h={14}>
            <path d="M.700.700h12.600v12.600H.700zM3.500 2.500h7v9h-7zM5 5h4M5 7h4M5 9h4" stroke="#6d6d6d" strokeWidth="1.200" />
          </Svg>
        </IconButton>
        <IconButton label="Page break view" className="w-[36px]">
          <Svg w={14} h={14}>
            <path d="M.700.700h12.600v12.600H.700zM4.500 1v7.500M9.500 1v7.500M1 8.500h9" stroke="#6d6d6d" strokeWidth="1.200" />
          </Svg>
        </IconButton>
        <IconButton label="Zoom out" className="ml-[8px]">
          <Svg w={8} h={8}><path d="M0 4h8" stroke="#555" strokeWidth="2" /></Svg>
        </IconButton>
        <input
          type="range"
          aria-label="Zoom"
          min={0}
          max={100}
          defaultValue={50}
          className="mx-[7px] h-1 w-[100px] appearance-none rounded-full bg-[#989898] [&::-webkit-slider-thumb]:h-4 [&::-webkit-slider-thumb]:w-4 [&::-webkit-slider-thumb]:appearance-none [&::-webkit-slider-thumb]:rounded-full [&::-webkit-slider-thumb]:bg-white [&::-webkit-slider-thumb]:shadow"
        />
        <IconButton label="Zoom in">
          <Svg w={8} h={8}><path d="M0 4h8M4 0v8" stroke="#555" strokeWidth="1.800" /></Svg>
        </IconButton>
        <span className="ml-[17px]">100%</span>
      </div>
    </footer>
  );
}

export default function App() {
  return (
    <div className="flex h-screen flex-col overflow-hidden font-[Inter,sans-serif]">
      <TitleBar />
      <RibbonTabs />
      <Ribbon />
      <FormulaBar />
      <main className="relative min-h-0 flex-1 overflow-hidden bg-[#682a91]">
        <SheetTable />
        <SheetObjects />
      </main>
      <SheetTabs />
      <StatusBar />
    </div>
  );
}
